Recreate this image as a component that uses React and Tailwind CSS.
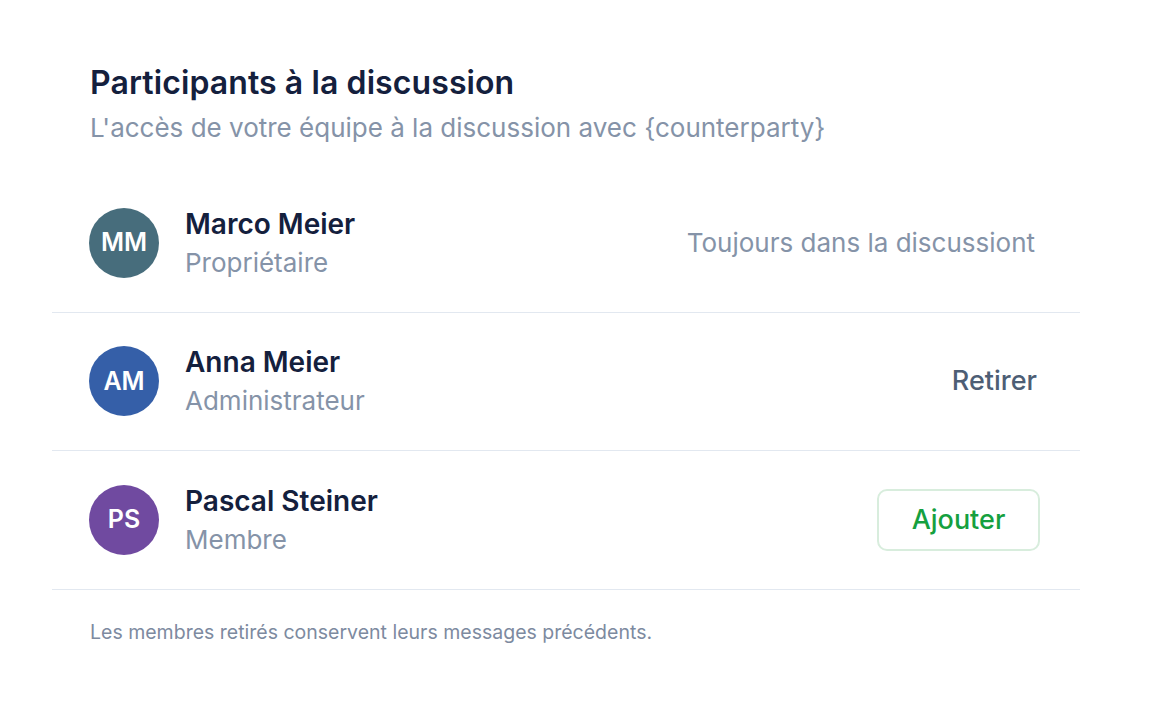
export default function App() {
  const rows = [
    { initials: "MM", name: "Marco Meier", role: "Propriétaire", color: "bg-[#476d7c]", action: "status" },
    { initials: "AM", name: "Anna Meier", role: "Administrateur", color: "bg-[#355fa8]", action: "remove" },
    { initials: "PS", name: "Pascal Steiner", role: "Membre", color: "bg-[#704aa0]", action: "add" },
  ];
  return (
    <div className="w-[1160px] h-[716px] bg-white font-['Inter','Liberation_Sans',sans-serif] pt-[64px] pl-[52px]">
      <div className="w-[1028px]">
        <div className="pl-[38px]">
          <h1 className="text-[32px] leading-[38px] font-semibold text-[#14203d] tracking-[0.003em]">Participants à la discussion</h1>
          <p className="text-[26px] leading-[32px] text-[#8593a8] mt-[10px]">L'accès de votre équipe à la discussion avec {"{counterparty}"}</p>
        </div>
        <div className="mt-[30px]">
          {rows.map((r) => (
            <div key={r.initials} className="h-[138.5px] flex items-center border-b border-[#e2e8f0] pl-[37px] pr-[40px]">
              <div className={`w-[70px] h-[70px] rounded-full ${r.color} flex items-center justify-center text-white text-[25px] font-semibold`}>{r.initials}</div>
              <div className="ml-[26px] flex-1 flex flex-col">
                <div className="text-[28px] leading-[34px] font-semibold text-[#14203d]">{r.name}</div>
                <div className="text-[26px] leading-[32px] text-[#8593a8] mt-[6px]">{r.role}</div>
              </div>
              {r.action === "status" && (
                <div className="text-[26px] text-[#8593a8] mr-[5px]">Toujours dans la discussiont</div>
              )}
              {r.action === "remove" && (
                <div className="text-[27px] font-medium text-[#4d5e75] mr-[3px]">Retirer</div>
              )}
              {r.action === "add" && (
                <button className="h-[62px] w-[163px] rounded-[10px] border-2 border-[#d8eddd] text-[27px] font-medium text-[#15a03f] flex items-center justify-center">Ajouter</button>
              )}
            </div>
          ))}
        </div>
        <p className="pl-[38px] mt-[28px] text-[19.5px] leading-[28px] text-[#7d8aa0]">Les membres retirés conservent leurs messages précédents.</p>
      </div>
    </div>
  );
}
